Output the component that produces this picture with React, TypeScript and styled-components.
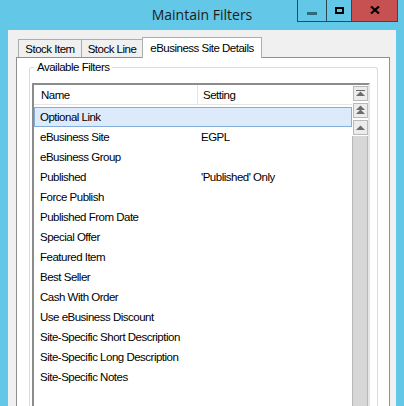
import React from 'react';
import styled, { createGlobalStyle } from 'styled-components';

const Global = createGlobalStyle`
  html, body { margin: 0; padding: 0; }
  body {
    width: 404px;
    height: 406px;
    overflow: hidden;
    background: #63c7e8;
    font-family: "Liberation Sans", Arial, sans-serif;
  }
`;

const Window = styled.div`
  width: 404px;
  height: 406px;
  background: #63c7e8;
  display: flex;
  flex-direction: column;
  overflow: hidden;
`;

const TitleBar = styled.div`
  height: 30px;
  flex: none;
  display: grid;
  grid-template-columns: 1fr auto 1fr;
  align-items: start;
`;

const Title = styled.div`
  grid-column: 2;
  line-height: 30px;
  font-family: "Open Sans", "Liberation Sans", sans-serif;
  font-size: 14px;
  color: #1b1b1b;
  white-space: nowrap;
`;

const Controls = styled.div`
  grid-column: 3;
  justify-self: end;
  display: flex;
  margin-right: 6px;
`;

const CaptionButton = styled.div<{ $w: number; $close?: boolean }>`
  width: ${(p) => p.$w}px;
  height: 22px;
  box-sizing: border-box;
  border: 1px solid #2f4a55;
  border-top: 0;
  margin-left: -1px;
  background: ${(p) => (p.$close ? '#c75050' : 'transparent')};
  display: flex;
  align-items: center;
  justify-content: center;
  &:first-child { margin-left: 0; }
`;

const MinGlyph = styled.div`
  width: 10px;
  height: 3px;
  margin-top: 5px;
  background: #2d6a7e;
`;

const MaxGlyph = styled.div`
  width: 9px;
  height: 7px;
  box-sizing: border-box;
  border: 2px solid #000;
  margin-top: -1px;
`;

const Client = styled.div`
  flex: 1;
  margin: 0 8px;
  background: #f0f0f0;
  padding: 7px 6px 0 8px;
  display: flex;
  flex-direction: column;
  min-height: 0;
`;

const TabStrip = styled.div`
  display: flex;
  align-items: flex-end;
  height: 21px;
  padding-left: 2px;
  margin-bottom: -1px;
  flex: none;
`;

const uiText = `
  font-size: 11.5px;
  letter-spacing: -0.5px;
  color: #000;
`;

const Tab = styled.div<{ $w: number; $active?: boolean }>`
  width: ${(p) => p.$w}px;
  height: ${(p) => (p.$active ? 21 : 18)}px;
  margin-bottom: ${(p) => (p.$active ? 0 : 1)}px;
  margin-left: -1px;
  box-sizing: border-box;
  border: 1px solid #adadad;
  border-bottom: 0;
  background: ${(p) => (p.$active ? '#ffffff' : '#f0f0f0')};
  position: ${(p) => (p.$active ? 'relative' : 'static')};
  z-index: ${(p) => (p.$active ? 1 : 'auto')};
  display: flex;
  align-items: center;
  justify-content: center;
  padding-top: ${(p) => (p.$active ? 0 : 1)}px;
  ${uiText}
  white-space: nowrap;
  &:first-child { margin-left: 0; }
`;

const Panel = styled.div`
  flex: 1;
  border: 1px solid #8e8f8f;
  border-bottom: 0;
  background: #fff;
  padding: 3px 11px 0 12px;
  display: flex;
  flex-direction: column;
  min-height: 0;
`;

const Group = styled.fieldset`
  margin: 0;
  flex: 1;
  min-height: 0;
  border: 1px solid #d9dde2;
  border-bottom: 0;
  border-radius: 3px 3px 0 0;
  padding: 9px 7px 0 2px;
  display: flex;
  flex-direction: column;
`;

const Legend = styled.legend`
  margin-left: 2px;
  padding: 0 3px;
  line-height: 13px;
  ${uiText}
`;

const ListBox = styled.div`
  flex: 1;
  display: grid;
  grid-template-columns: 1fr 16px;
  border-style: solid;
  border-width: 2px 2px 0 2px;
  border-color: #8c8c8c #e6e6e6 #e6e6e6 #8c8c8c;
  background: #fff;
  min-height: 0;
`;

const Columns = styled.div`
  display: flex;
  flex-direction: column;
  min-width: 0;
`;

const Header = styled.div`
  display: grid;
  grid-template-columns: 164px 1fr;
  height: 20px;
  box-sizing: border-box;
  border-bottom: 1px solid #e5e5e5;
`;

const HeaderCell = styled.div<{ $pad: number; $sep?: boolean }>`
  display: flex;
  align-items: center;
  padding-left: ${(p) => p.$pad}px;
  border-right: ${(p) => (p.$sep ? '1px solid #e5e5e5' : '0')};
  ${uiText}
`;

const Rows = styled.div`
  padding-top: 2px;
  display: flex;
  flex-direction: column;
`;

const Row = styled.div<{ $selected?: boolean }>`
  display: grid;
  grid-template-columns: 164px 1fr;
  height: 20px;
  background: ${(p) => (p.$selected ? '#dcebfc' : 'transparent')};
  box-shadow: ${(p) => (p.$selected ? 'inset 0 0 0 1px #84acdd' : 'none')};
`;

const Cell = styled.div<{ $pad: number }>`
  display: flex;
  align-items: center;
  padding-left: ${(p) => p.$pad}px;
  ${uiText}
  white-space: nowrap;
  overflow: hidden;
`;

const ScrollBar = styled.div`
  display: flex;
  flex-direction: column;
  align-items: center;
  padding-top: 1px;
  gap: 2px;
`;

const ScrollButton = styled.div`
  width: 15px;
  height: 15px;
  box-sizing: border-box;
  border: 1px solid #b9b9b9;
  background: #ececec;
  display: flex;
`;

const Track = styled.div`
  flex: 1;
  align-self: stretch;
  margin-top: -1px;
  background: #d7d7d7;
  border-left: 1px solid #b8b8b8;
  border-right: 1px solid #b8b8b8;
`;

const rows: [string, string][] = [
  ['Optional Link', ''],
  ['eBusiness Site', 'EGPL'],
  ['eBusiness Group', ''],
  ['Published', "'Published' Only"],
  ['Force Publish', ''],
  ['Published From Date', ''],
  ['Special Offer', ''],
  ['Featured Item', ''],
  ['Best Seller', ''],
  ['Cash With Order', ''],
  ['Use eBusiness Discount', ''],
  ['Site-Specific Short Description', ''],
  ['Site-Specific Long Description', ''],
  ['Site-Specific Notes', ''],
];

const Glyph: React.FC<{ kind: 'top' | 'page' | 'up' }> = ({ kind }) => (
  <svg width="13" height="13" viewBox="0 0 13 13">
    {kind === 'top' && (
      <>
        <rect x="2" y="3" width="9" height="1" fill="#6b6b6b" />
        <polygon points="2,9 11,9 6.5,4.5" fill="#6b6b6b" />
      </>
    )}
    {kind === 'page' && (
      <>
        <polygon points="2,6 11,6 6.5,1.5" fill="#6b6b6b" />
        <polygon points="2,10 11,10 6.5,5.5" fill="#6b6b6b" />
      </>
    )}
    {kind === 'up' && <polygon points="2,9 11,9 6.5,4.5" fill="#6b6b6b" />}
  </svg>
);

export default function App() {
  return (
    <>
      <Global />
      <Window>
        <TitleBar>
          <Title>Maintain Filters</Title>
          <Controls>
            <CaptionButton $w={30}>
              <MinGlyph />
            </CaptionButton>
            <CaptionButton $w={26}>
              <MaxGlyph />
            </CaptionButton>
            <CaptionButton $w={47} $close>
              <svg width="10" height="8" viewBox="0 0 10 8" style={{ marginTop: -1 }}>
                <path d="M1 0.5 L9 7.5 M9 0.5 L1 7.5" stroke="#000" strokeWidth="2.2" />
              </svg>
            </CaptionButton>
          </Controls>
        </TitleBar>
        <Client>
          <TabStrip>
            <Tab $w={64}>Stock Item</Tab>
            <Tab $w={62}>Stock Line</Tab>
            <Tab $w={120} $active>
              eBusiness Site Details
            </Tab>
          </TabStrip>
          <Panel>
            <Group>
              <Legend>Available Filters</Legend>
              <ListBox>
                <Columns>
                  <Header>
                    <HeaderCell $pad={7} $sep>
                      Name
                    </HeaderCell>
                    <HeaderCell $pad={5}>Setting</HeaderCell>
                  </Header>
                  <Rows>
                    {rows.map(([name, setting], i) => (
                      <Row key={name} $selected={i === 0}>
                        <Cell $pad={6}>{name}</Cell>
                        <Cell $pad={3}>{setting}</Cell>
                      </Row>
                    ))}
                  </Rows>
                </Columns>
                <ScrollBar>
                  <ScrollButton>
                    <Glyph kind="top" />
                  </ScrollButton>
                  <ScrollButton>
                    <Glyph kind="page" />
                  </ScrollButton>
                  <ScrollButton>
                    <Glyph kind="up" />
                  </ScrollButton>
                  <Track />
                </ScrollBar>
              </ListBox>
            </Group>
          </Panel>
        </Client>
      </Window>
    </>
  );
}
